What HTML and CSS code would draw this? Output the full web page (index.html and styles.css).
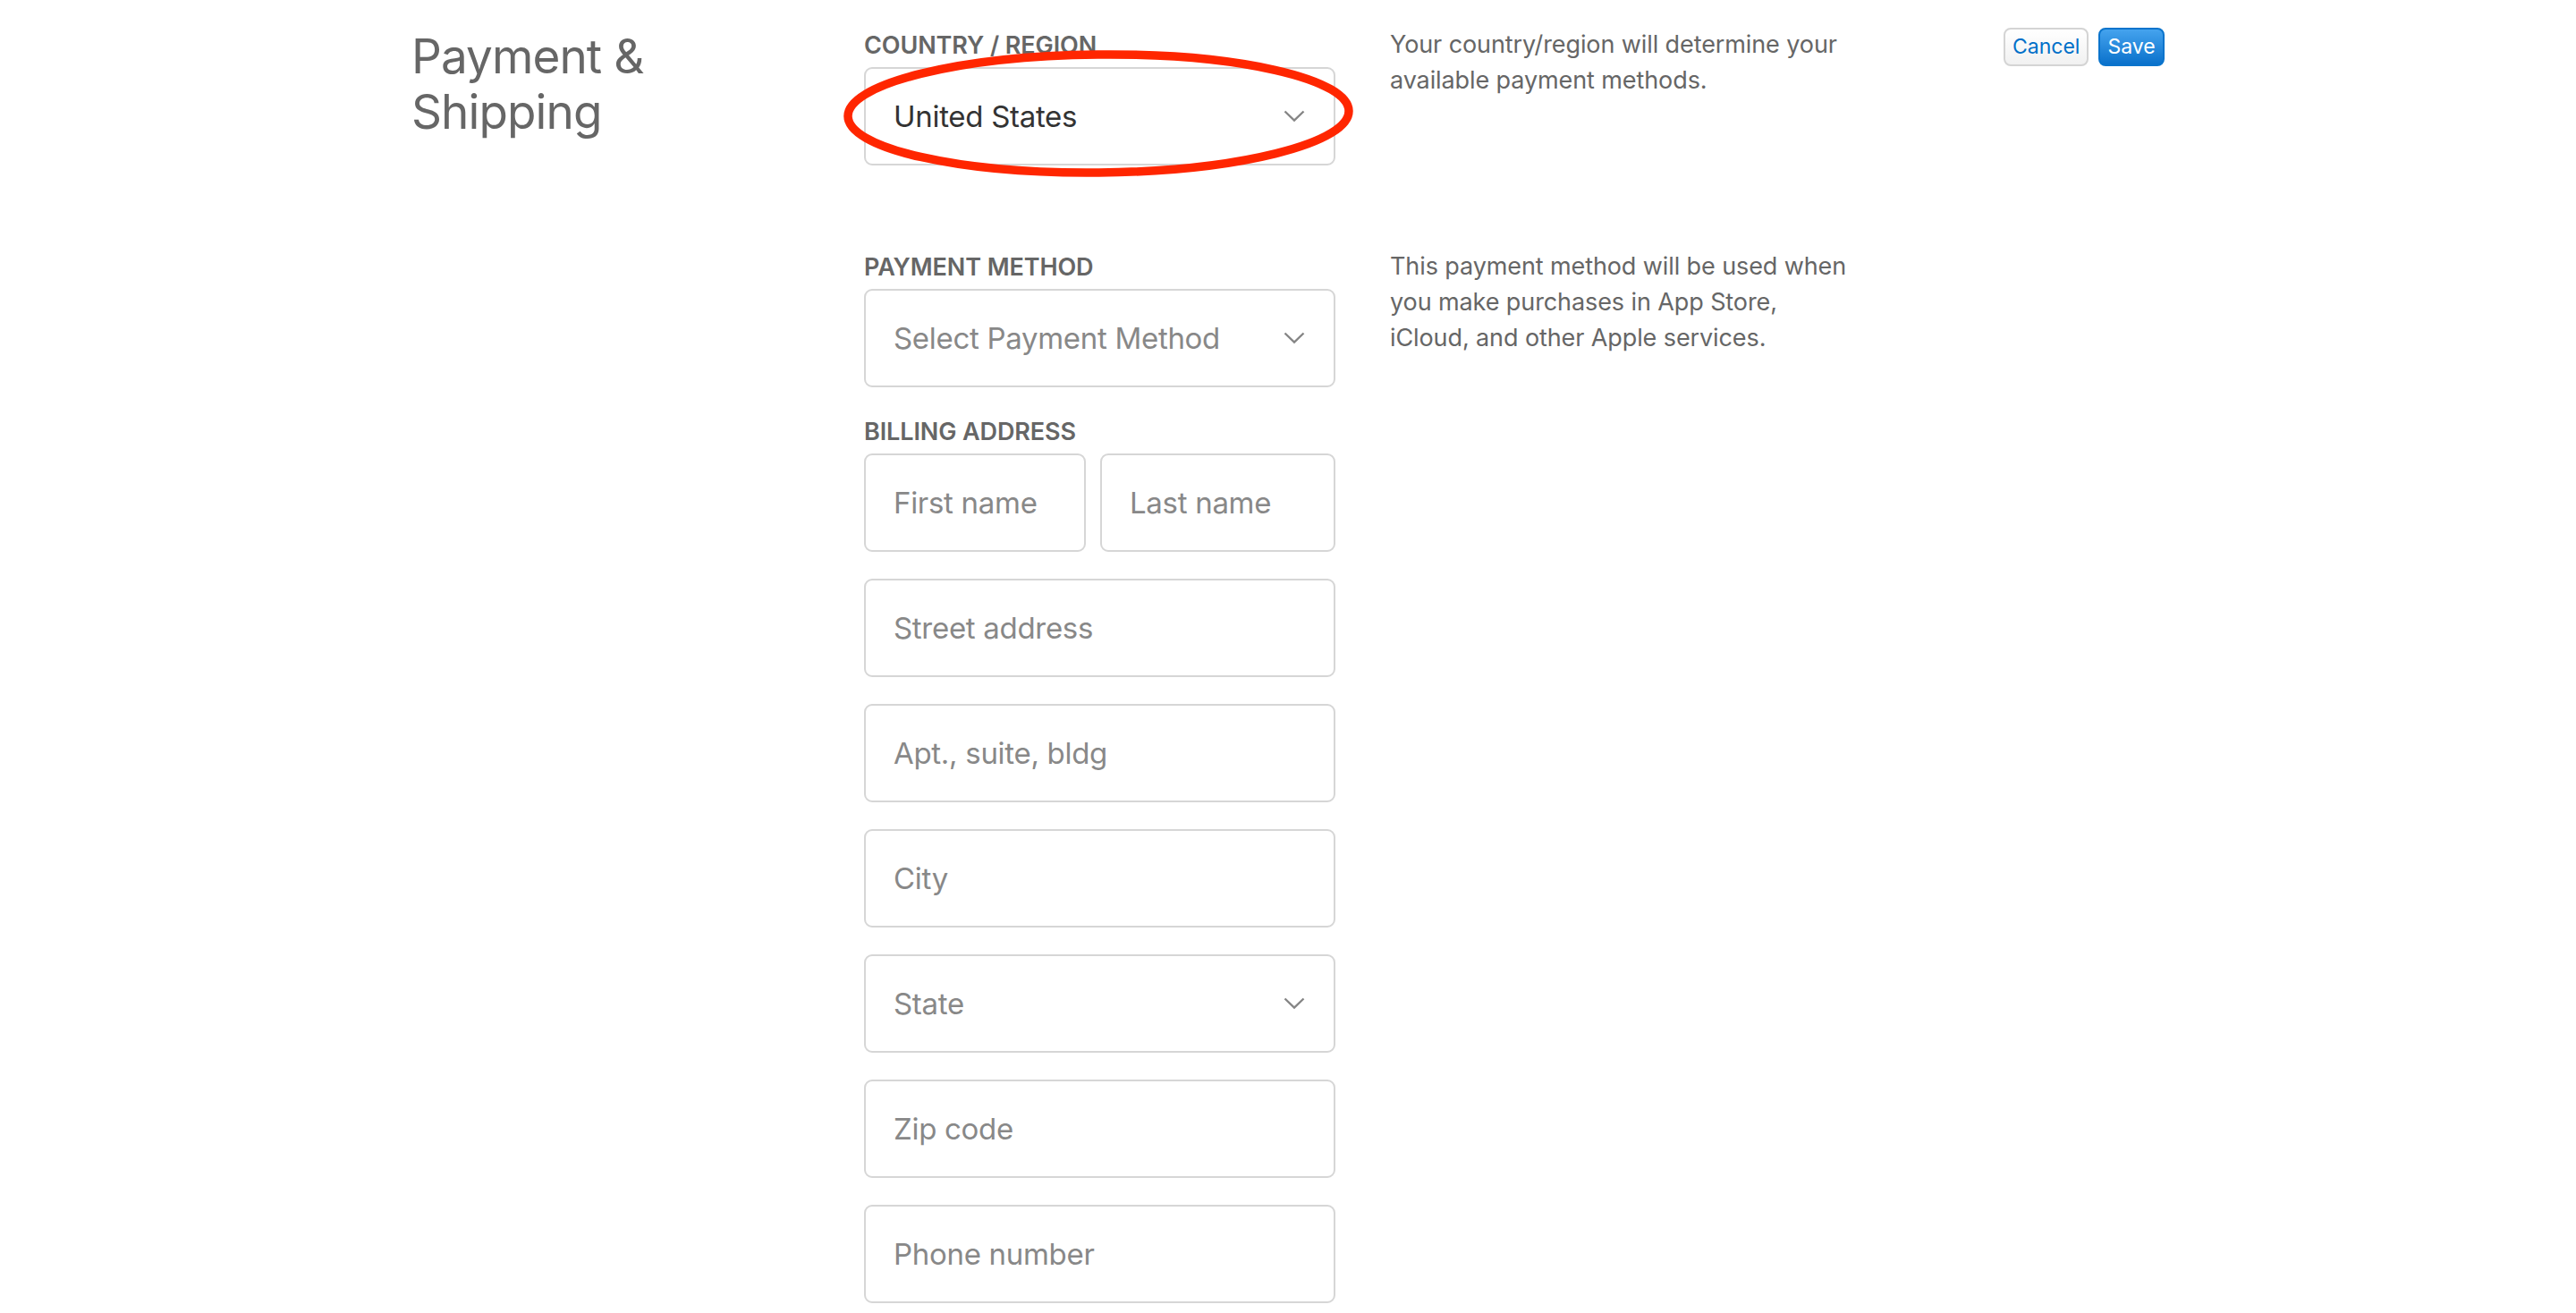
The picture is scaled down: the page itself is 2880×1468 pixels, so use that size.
FILE: index.html
```html
<!DOCTYPE html>
<html lang="en">
<head>
<meta charset="utf-8">
<title>Payment &amp; Shipping</title>
<link rel="stylesheet" href="styles.css">
</head>
<body>
<div class="page">
  <div class="container">
    <h1 class="title">Payment &amp;<br>Shipping</h1>

    <div class="main">
      <section class="row row-country">
        <div class="form-col">
          <div class="label">COUNTRY / REGION</div>
          <div class="field select">
            <span class="value">United States</span>
            <svg class="chevron" width="24" height="14" viewBox="0 0 24 14"><polyline points="1.5,1.5 12,11.5 22.5,1.5" fill="none" stroke="#858585" stroke-width="2.4"/></svg>
          </div>
          <svg class="annotation" width="580" height="150" viewBox="0 0 580 150"><ellipse cx="288" cy="72" rx="280" ry="66" fill="none" stroke="#ff2600" stroke-width="9.5" transform="rotate(-0.6 288 72)"/></svg>
        </div>
        <p class="desc">Your country/region will determine your<br>available payment methods.</p>
      </section>

      <section class="row row-payment">
        <div class="form-col">
          <div class="label">PAYMENT METHOD</div>
          <div class="field select">
            <span class="placeholder">Select Payment Method</span>
            <svg class="chevron" width="24" height="14" viewBox="0 0 24 14"><polyline points="1.5,1.5 12,11.5 22.5,1.5" fill="none" stroke="#858585" stroke-width="2.4"/></svg>
          </div>
        </div>
        <p class="desc">This payment method will be used when<br>you make purchases in App Store,<br>iCloud, and other Apple services.</p>
      </section>

      <section class="row row-billing">
        <div class="form-col">
          <div class="label">BILLING ADDRESS</div>
          <div class="name-row">
            <div class="field"><span class="placeholder">First name</span></div>
            <div class="field"><span class="placeholder">Last name</span></div>
          </div>
          <div class="field"><span class="placeholder">Street address</span></div>
          <div class="field"><span class="placeholder">Apt., suite, bldg</span></div>
          <div class="field"><span class="placeholder">City</span></div>
          <div class="field select">
            <span class="placeholder">State</span>
            <svg class="chevron" width="24" height="14" viewBox="0 0 24 14"><polyline points="1.5,1.5 12,11.5 22.5,1.5" fill="none" stroke="#858585" stroke-width="2.4"/></svg>
          </div>
          <div class="field"><span class="placeholder">Zip code</span></div>
          <div class="field"><span class="placeholder">Phone number</span></div>
        </div>
      </section>
    </div>

    <div class="actions">
      <button class="btn btn-cancel">Cancel</button>
      <button class="btn btn-save">Save</button>
    </div>
  </div>
</div>
</body>
</html>
```

FILE: styles.css
```css
html, body {
  margin: 0;
  padding: 0;
  background: #ffffff;
}

body {
  font-family: "Inter", "Roboto", "Liberation Sans", sans-serif;
  color: #333333;
}

.page {
  width: 100%;
}

.container {
  width: 1960px;
  margin: 0 auto;
  display: flex;
  align-items: flex-start;
  padding-top: 30px;
}

.title {
  width: 506px;
  flex: none;
  margin: 2px 0 0 0;
  font-size: 53px;
  font-weight: 400;
  line-height: 62px;
  color: #666666;
  letter-spacing: -0.9px;
}

.main {
  flex: 1;
  display: flex;
  flex-direction: column;
}

.row {
  display: flex;
  align-items: flex-start;
}

.row-payment {
  margin-top: 93px;
}

.row-billing {
  margin-top: 29px;
}

.form-col {
  width: 527px;
  flex: none;
  position: relative;
  display: flex;
  flex-direction: column;
  gap: 30px;
}

.label {
  font-size: 27px;
  line-height: 36px;
  font-weight: 600;
  color: #666666;
  margin-top: 3px;
  margin-bottom: -24px;
  letter-spacing: -0.1px;
}

.field {
  box-sizing: border-box;
  height: 110px;
  border: 2px solid #d6d6d6;
  border-radius: 9px;
  padding: 0 31px;
  display: flex;
  align-items: center;
  font-size: 33px;
  letter-spacing: -0.3px;
  background: #ffffff;
}

.select {
  justify-content: space-between;
  padding-right: 32px;
}

.value {
  color: #333333;
}

.placeholder {
  color: #888888;
}

.chevron {
  display: block;
  flex: none;
}

.name-row {
  display: grid;
  grid-template-columns: 248px 1fr;
  gap: 16px;
}

.annotation {
  position: absolute;
  left: -26px;
  top: 25px;
  pointer-events: none;
}

.desc {
  margin: 0 0 0 61px;
  font-size: 27px;
  line-height: 40px;
  color: #666666;
  letter-spacing: -0.1px;
}

.actions {
  flex: none;
  display: flex;
  gap: 11px;
  margin-top: 1px;
}

.btn {
  box-sizing: border-box;
  height: 43px;
  border-radius: 8px;
  font-family: "Inter", "Roboto", "Liberation Sans", sans-serif;
  font-size: 23px;
  padding: 0 8px;
  line-height: 1;
}

.btn-cancel {
  width: 95px;
  border: 2px solid #d4d4d4;
  background: linear-gradient(#ffffff, #f1f1f1);
  color: #0070c9;
}

.btn-save {
  width: 74px;
  border: 2px solid #0a74cc;
  background: linear-gradient(#45a3ee, #0a71cb);
  color: #ffffff;
}
```
